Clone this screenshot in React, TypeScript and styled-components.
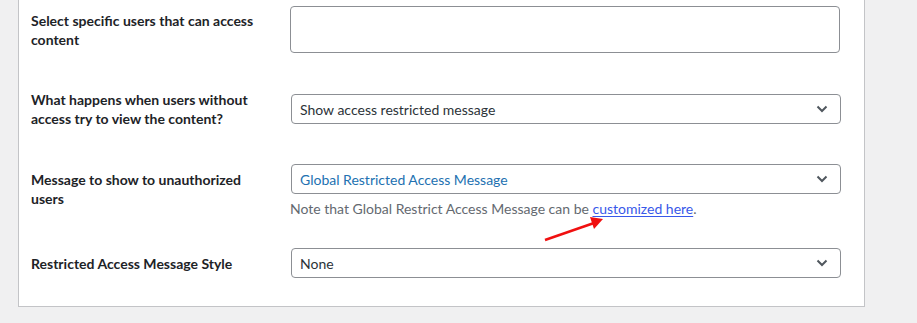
import styled, { createGlobalStyle } from "styled-components";

const GlobalStyle = createGlobalStyle`
    html, body {
        margin: 0;
        padding: 0;
        background: #f0f0f1;
    }
    body {
        font-family: Lato, "Noto Sans", sans-serif;
        font-size: 14px;
        color: #1d2327;
    }
`;

// ── Settings panel (top edge is scrolled off) ──────────────────────────────────────
const Panel = styled.div`
    position: relative;
    width: 847px;
    margin-left: 18px;
    background: #fff;
    border: 1px solid #c3c4c7;
    border-top: none;
    padding: 0 0 8px 12px;
    box-sizing: border-box;
`;

const Row = styled.div<{ $pt?: number; $pb?: number }>`
    display: grid;
    grid-template-columns: 259px 551px;
    align-items: center;
    padding-top: ${(p) => p.$pt ?? 20}px;
    padding-bottom: ${(p) => p.$pb ?? 20}px;
`;

const Label = styled.div<{ $lift?: number }>`
    font-weight: 700;
    font-size: 14px;
    line-height: 19px;
    color: #1d2327;
    padding-right: 19px;
    margin-bottom: ${(p) => (p.$lift ?? 0) * 2}px;
`;

const Field = styled.div`
    display: flex;
    flex-direction: column;
`;

const TextArea = styled.div`
    width: 550px;
    height: 47px;
    box-sizing: border-box;
    border: 1px solid #8c8f94;
    border-radius: 4px;
    background: #fff;
`;

const SelectBox = styled.div<{ $blue?: boolean }>`
    margin-left: 1px;
    height: 30px;
    box-sizing: border-box;
    border: 1px solid #8c8f94;
    border-radius: 4px;
    background: #fff;
    display: flex;
    align-items: center;
    justify-content: space-between;
    padding: 0 12px 0 8px;
    font-size: 14px;
    color: ${(p) => (p.$blue ? "#2271b1" : "#2c3338")};
`;

const Note = styled.p`
    margin: 5px 0 0;
    font-size: 14px;
    line-height: 20px;
    color: #646970;
    position: relative;
`;

const Link = styled.a`
    color: #3858e9;
    text-decoration: underline;
    text-underline-offset: 2px;
`;

const Arrow = styled.svg`
    position: absolute;
    left: 254px;
    top: 15px;
    pointer-events: none;
`;

const Chevron = () => (
    <svg width="12" height="8" viewBox="0 0 12 8">
        <path d="M1.5 1.5 L6 6 L10.5 1.5" fill="none" stroke="#50575e" strokeWidth="2" />
    </svg>
);

const Select = ({ value, blue }: { value: string; blue?: boolean }) => (
    <SelectBox $blue={blue}>
        <span>{value}</span>
        <Chevron />
    </SelectBox>
);

export default function App() {
    return (
        <>
            <GlobalStyle />
            <Panel>
                <Row $pt={6} $pb={17}>
                    <Label>Select specific users that can access content</Label>
                    <Field>
                        <TextArea />
                    </Field>
                </Row>
                <Row $pb={16}>
                    <Label>What happens when users without access try to view the content?</Label>
                    <Field>
                        <Select value="Show access restricted message" />
                    </Field>
                </Row>
                <Row $pb={9}>
                    <Label $lift={3}>Message to show to unauthorized users</Label>
                    <Field>
                        <Select value="Global Restricted Access Message" blue />
                        <Note>
                            Note that Global Restrict Access Message can be <Link href="#">customized here</Link>.
                            {/* red annotation arrow pointing at the link */}
                            <Arrow width="64" height="32" viewBox="0 0 64 32">
                                <line x1="1" y1="26" x2="50" y2="9" stroke="#f01010" strokeWidth="2.5" />
                                <polygon points="59,5 46,3 50,15" fill="#f01010" />
                            </Arrow>
                        </Note>
                    </Field>
                </Row>
                <Row>
                    <Label>Restricted Access Message Style</Label>
                    <Field>
                        <Select value="None" />
                    </Field>
                </Row>
            </Panel>
        </>
    );
}
